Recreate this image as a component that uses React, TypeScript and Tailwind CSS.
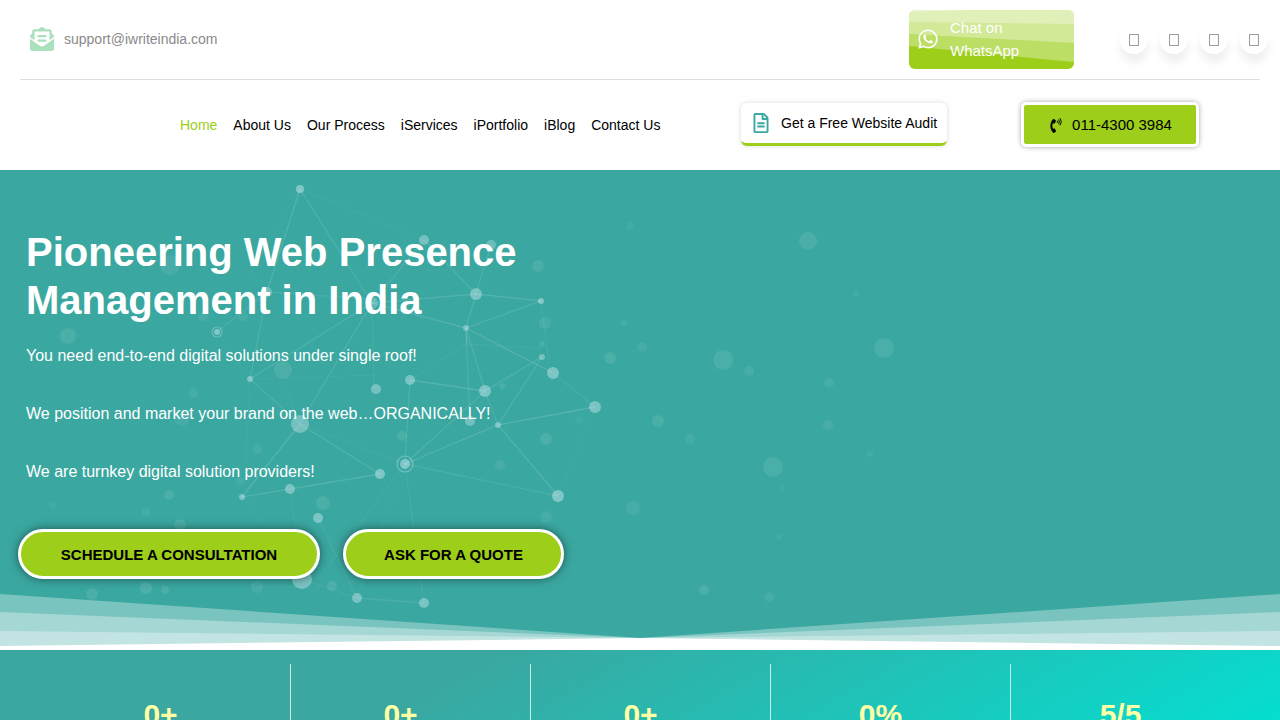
import { FaEnvelopeOpenText, FaWhatsapp, FaRegFileAlt, FaPhoneVolume } from "react-icons/fa";

const navItems = ["Home", "About Us", "Our Process", "iServices", "iPortfolio", "iBlog", "Contact Us"];

const socials = ["Facebook", "Twitter", "LinkedIn", "Instagram"];

const stats = ["0+", "0+", "0+", "0%", "5/5"];

// x, y, radius, opacity
const dots: [number, number, number, number][] = [
  [300, 19, 4, 0.42], [424, 70, 5, 0.35], [491, 75, 5, 0.3], [538, 96, 6, 0.1], [630, 56, 4, 0.06],
  [476, 124, 6, 0.38], [541, 131, 3, 0.42], [466, 158, 3, 0.36], [545, 153, 6, 0.09], [542, 187, 3, 0.36],
  [542, 174, 3, 0.1], [624, 153, 3, 0.08], [610, 188, 6, 0.1], [642, 177, 5, 0.08], [553, 203, 6, 0.4],
  [410, 210, 5, 0.38], [376, 219, 5, 0.36], [485, 221, 6, 0.4], [502, 216, 3, 0.1], [595, 237, 6, 0.38],
  [498, 255, 3, 0.38], [470, 251, 5, 0.34], [546, 269, 6, 0.1], [500, 295, 5, 0.09], [579, 250, 4, 0.06],
  [405, 294, 5, 0.42], [380, 304, 5, 0.42], [558, 326, 6, 0.42], [546, 347, 6, 0.08], [633, 338, 7, 0.09],
  [300, 254, 9, 0.35], [290, 319, 5, 0.38], [242, 327, 3, 0.4], [318, 348, 5, 0.4], [323, 333, 7, 0.1],
  [302, 409, 10, 0.38], [357, 428, 5, 0.38], [424, 433, 5, 0.38], [332, 416, 5, 0.12], [217, 162, 3, 0.42],
  [267, 122, 5, 0.3], [250, 209, 3, 0.4], [283, 200, 9, 0.1], [170, 95, 10, 0.09], [68, 166, 8, 0.1],
  [193, 223, 5, 0.08], [203, 147, 5, 0.07], [243, 147, 5, 0.07], [182, 248, 8, 0.08], [257, 279, 5, 0.08],
  [240, 311, 4, 0.08], [169, 325, 5, 0.1], [53, 335, 4, 0.05], [146, 342, 4, 0.07], [180, 355, 6, 0.1],
  [92, 424, 6, 0.1], [146, 418, 6, 0.12], [165, 420, 4, 0.1], [257, 417, 6, 0.09], [402, 266, 5, 0.1],
  [372, 133, 6, 0.25], [808, 71, 9, 0.1], [856, 124, 3, 0.08], [884, 178, 10, 0.11], [723, 190, 10, 0.11],
  [749, 201, 5, 0.09], [829, 213, 5, 0.08], [658, 251, 6, 0.1], [690, 269, 5, 0.08], [828, 255, 5, 0.09],
  [870, 284, 3, 0.07], [773, 297, 10, 0.11], [782, 318, 3, 0.04], [779, 367, 3, 0.06], [704, 420, 5, 0.1],
  [769, 427, 5, 0.07],
];

// x1, y1, x2, y2, opacity
const links: [number, number, number, number, number][] = [
  [300, 19, 267, 122, 0.2], [300, 19, 372, 133, 0.18], [300, 19, 424, 70, 0.08], [300, 19, 245, 112, 0.05],
  [267, 122, 372, 129, 0.13], [267, 122, 217, 162, 0.14], [267, 122, 250, 209, 0.18], [372, 133, 424, 70, 0.15],
  [424, 70, 476, 124, 0.18], [491, 75, 476, 124, 0.17], [372, 133, 476, 124, 0.2], [476, 124, 541, 131, 0.22],
  [476, 124, 466, 158, 0.2], [541, 131, 466, 158, 0.22], [372, 133, 466, 158, 0.2], [466, 158, 553, 203, 0.22],
  [541, 131, 550, 203, 0.1], [250, 209, 372, 133, 0.2], [372, 133, 300, 254, 0.18], [372, 133, 374, 219, 0.1],
  [466, 158, 470, 251, 0.16], [466, 158, 485, 221, 0.18], [466, 158, 467, 174, 0.2], [410, 210, 485, 221, 0.22],
  [485, 221, 542, 187, 0.2], [485, 221, 405, 294, 0.18], [542, 187, 498, 255, 0.18], [485, 221, 498, 255, 0.14],
  [410, 210, 405, 294, 0.18], [498, 255, 595, 237, 0.24], [498, 255, 558, 326, 0.22], [405, 294, 498, 255, 0.24],
  [405, 294, 558, 326, 0.14], [250, 209, 300, 254, 0.16], [300, 254, 380, 304, 0.2], [300, 254, 242, 327, 0.22],
  [242, 327, 290, 319, 0.2], [290, 319, 380, 304, 0.2], [250, 209, 376, 205, 0.06], [410, 210, 466, 174, 0.08],
  [466, 174, 542, 178, 0.07], [553, 203, 595, 237, 0.12], [300, 254, 405, 294, 0.08], [290, 319, 302, 409, 0.09],
  [242, 327, 302, 409, 0.06], [405, 294, 424, 433, 0.1], [405, 294, 318, 409, 0.07], [405, 294, 357, 428, 0.06],
  [357, 428, 424, 433, 0.14], [318, 348, 357, 428, 0.1], [302, 409, 357, 428, 0.1], [250, 209, 245, 315, 0.06],
  [217, 162, 250, 209, 0.06], [595, 237, 558, 326, 0.05], [285, 217, 300, 254, 0.08], [257, 417, 302, 417, 0.08],
];

function Network() {
  return (
    <svg className="absolute left-0 top-0 h-[480px] w-[1280px]" viewBox="0 0 1280 480" aria-hidden="true">
      <g stroke="#d9f3f7" strokeWidth="1.3" opacity="0.75">
        {links.map(([x1, y1, x2, y2, o], i) => (
          <line key={i} x1={x1} y1={y1} x2={x2} y2={y2} strokeOpacity={o} />
        ))}
      </g>
      <g fill="#dff2fa">
        {dots.map(([x, y, r, o], i) => (
          <circle key={i} cx={x} cy={y} r={r} fillOpacity={o} />
        ))}
      </g>
      <circle cx="405" cy="294" r="8" fill="none" stroke="#dff2fa" strokeOpacity="0.35" strokeWidth="1.2" />
      <circle cx="217" cy="162" r="5" fill="none" stroke="#dff2fa" strokeOpacity="0.3" strokeWidth="1.2" />
    </svg>
  );
}

function Divider() {
  return (
    <svg
      className="absolute bottom-0 left-0 h-[57px] w-full"
      viewBox="0 0 1280 57"
      preserveAspectRatio="none"
      fill="#ffffff"
      aria-hidden="true"
    >
      <path fillOpacity="0.33" d="M0 1 L640 45 L1280 1 V57 H0Z" />
      <path fillOpacity="0.33" d="M0 19 L640 45 L1280 19 V57 H0Z" />
      <path fillOpacity="0.33" d="M0 38 L640 45 L1280 38 V57 H0Z" />
      <path d="M0 53 L640 45 L1280 53 V57 H0Z" />
    </svg>
  );
}

export default function App() {
  return (
    <div className="h-screen overflow-hidden bg-white font-['Liberation_Sans',Arial,sans-serif] text-black">
      <header>
        <div className="mx-5 flex h-20 items-center justify-between border-b border-[#dddddd]">
          <a href="mailto:support@iwriteindia.com" className="ml-2.5 flex items-center gap-2.5 pb-0.5 text-[#8a8a8a]">
            <FaEnvelopeOpenText className="size-6 text-[#abe0bc]" />
            <span className="text-sm">support@iwriteindia.com</span>
          </a>
          <div className="flex items-center gap-[46px]">
            <a
              href="#whatsapp"
              className="relative flex h-[59px] w-[165px] items-center overflow-hidden rounded-md bg-[#9dce19] pb-0.5 pl-2 text-white"
            >
              <svg
                className="absolute inset-0 size-full"
                viewBox="0 0 165 59"
                preserveAspectRatio="none"
                fill="#ffffff"
                aria-hidden="true"
              >
                <path fillOpacity="0.33" d="M0 0 H165 V52 L0 36Z" />
                <path fillOpacity="0.33" d="M0 0 H165 V33 L0 24Z" />
                <path fillOpacity="0.33" d="M0 0 H165 V14 L0 12Z" />
                <path fillOpacity="0.33" d="M0 0 H60 L0 2Z" />
              </svg>
              <FaWhatsapp className="relative size-[22px]" />
              <span className="relative ml-[11px] w-24 text-[15px] leading-[23px]">Chat on WhatsApp</span>
            </a>
            <ul className="-mr-2 flex gap-3">
              {socials.map((name) => (
                <li key={name}>
                  <a
                    href={`#${name.toLowerCase()}`}
                    aria-label={name}
                    className="flex size-7 items-center justify-center rounded-full bg-white text-[#9a9a9a] shadow-[0_8px_10px_rgba(0,0,0,0.07)]"
                  >
                    <svg className="h-3 w-2.5" viewBox="0 0 10 12" fill="none" stroke="currentColor" aria-hidden="true">
                      <path d="M.5 .5h9v11h-9z" />
                    </svg>
                  </a>
                </li>
              ))}
            </ul>
          </div>
        </div>

        <div className="flex h-[90px] items-center justify-between pl-[180px] pr-[81px]">
          <nav className="flex gap-4 text-sm">
            {navItems.map((n, i) => (
              <a key={n} href="#top" className={i === 0 ? "text-[#9dce19]" : "text-black"}>
                {n}
              </a>
            ))}
          </nav>
          <div className="flex items-center gap-[74px] pb-0.5">
            <a
              href="#audit"
              className="flex h-[43px] w-[206px] items-center gap-2.5 rounded-md border-b-[3px] border-[#9dce19] bg-white pl-2.5 text-sm shadow-[0_0_5px_rgba(0,0,0,0.15)]"
            >
              <FaRegFileAlt className="size-5 text-[#3aa7a0]" />
              <span>Get a Free Website Audit</span>
            </a>
            <a
              href="tel:01143003984"
              className="flex h-[45px] w-[178px] items-center justify-center gap-2.5 rounded-[5px] border-[3px] border-white bg-[#9dce19] pl-0.5 pt-0.5 text-[15px] shadow-[0_0_5px_rgba(0,0,0,0.35)]"
            >
              <FaPhoneVolume className="h-[15px] w-3" />
              <span>011-4300 3984</span>
            </a>
          </div>
        </div>
      </header>

      <section className="relative h-[480px] overflow-hidden bg-[#3aa7a0]">
        <Network />
        <Divider />
        <div className="relative px-[18px] pt-[58px] text-white">
          <div className="px-2">
            <h1 className="w-[520px] text-[40px] font-bold leading-[48px]">Pioneering Web Presence Management in India</h1>
            <div className="mt-5 flex flex-col gap-[34px] text-base leading-6">
              <p>You need end-to-end digital solutions under single roof!</p>
              <p>We position and market your brand on the web…ORGANICALLY!</p>
              <p>We are turnkey digital solution providers!</p>
            </div>
          </div>
          <div className="mt-[45px] flex gap-[23px] text-[15px] font-bold text-black">
            <button
              type="button"
              className="h-[50px] w-[302px] rounded-full border-[3px] border-white bg-[#9dce19] pt-0.5 shadow-[0_0_10px_rgba(0,0,0,0.5)]"
            >
              SCHEDULE A CONSULTATION
            </button>
            <button
              type="button"
              className="h-[50px] w-[221px] rounded-full border-[3px] border-white bg-[#9dce19] pt-0.5 shadow-[0_0_10px_rgba(0,0,0,0.5)]"
            >
              ASK FOR A QUOTE
            </button>
          </div>
        </div>
      </section>

      <section className="bg-[linear-gradient(150deg,#3aa7a0_30%,#06ddcf_84%)] pb-10 pl-[51px] pr-[29px] pt-3.5">
        <ul className="grid grid-cols-5 text-center text-[30px] font-bold leading-9 text-[#ffffa5]">
          {stats.map((s, i) => (
            <li key={i} className="h-40 border-r border-white/75 pr-5 pt-[33px] last:border-transparent">
              {s}
            </li>
          ))}
        </ul>
      </section>
    </div>
  );
}
